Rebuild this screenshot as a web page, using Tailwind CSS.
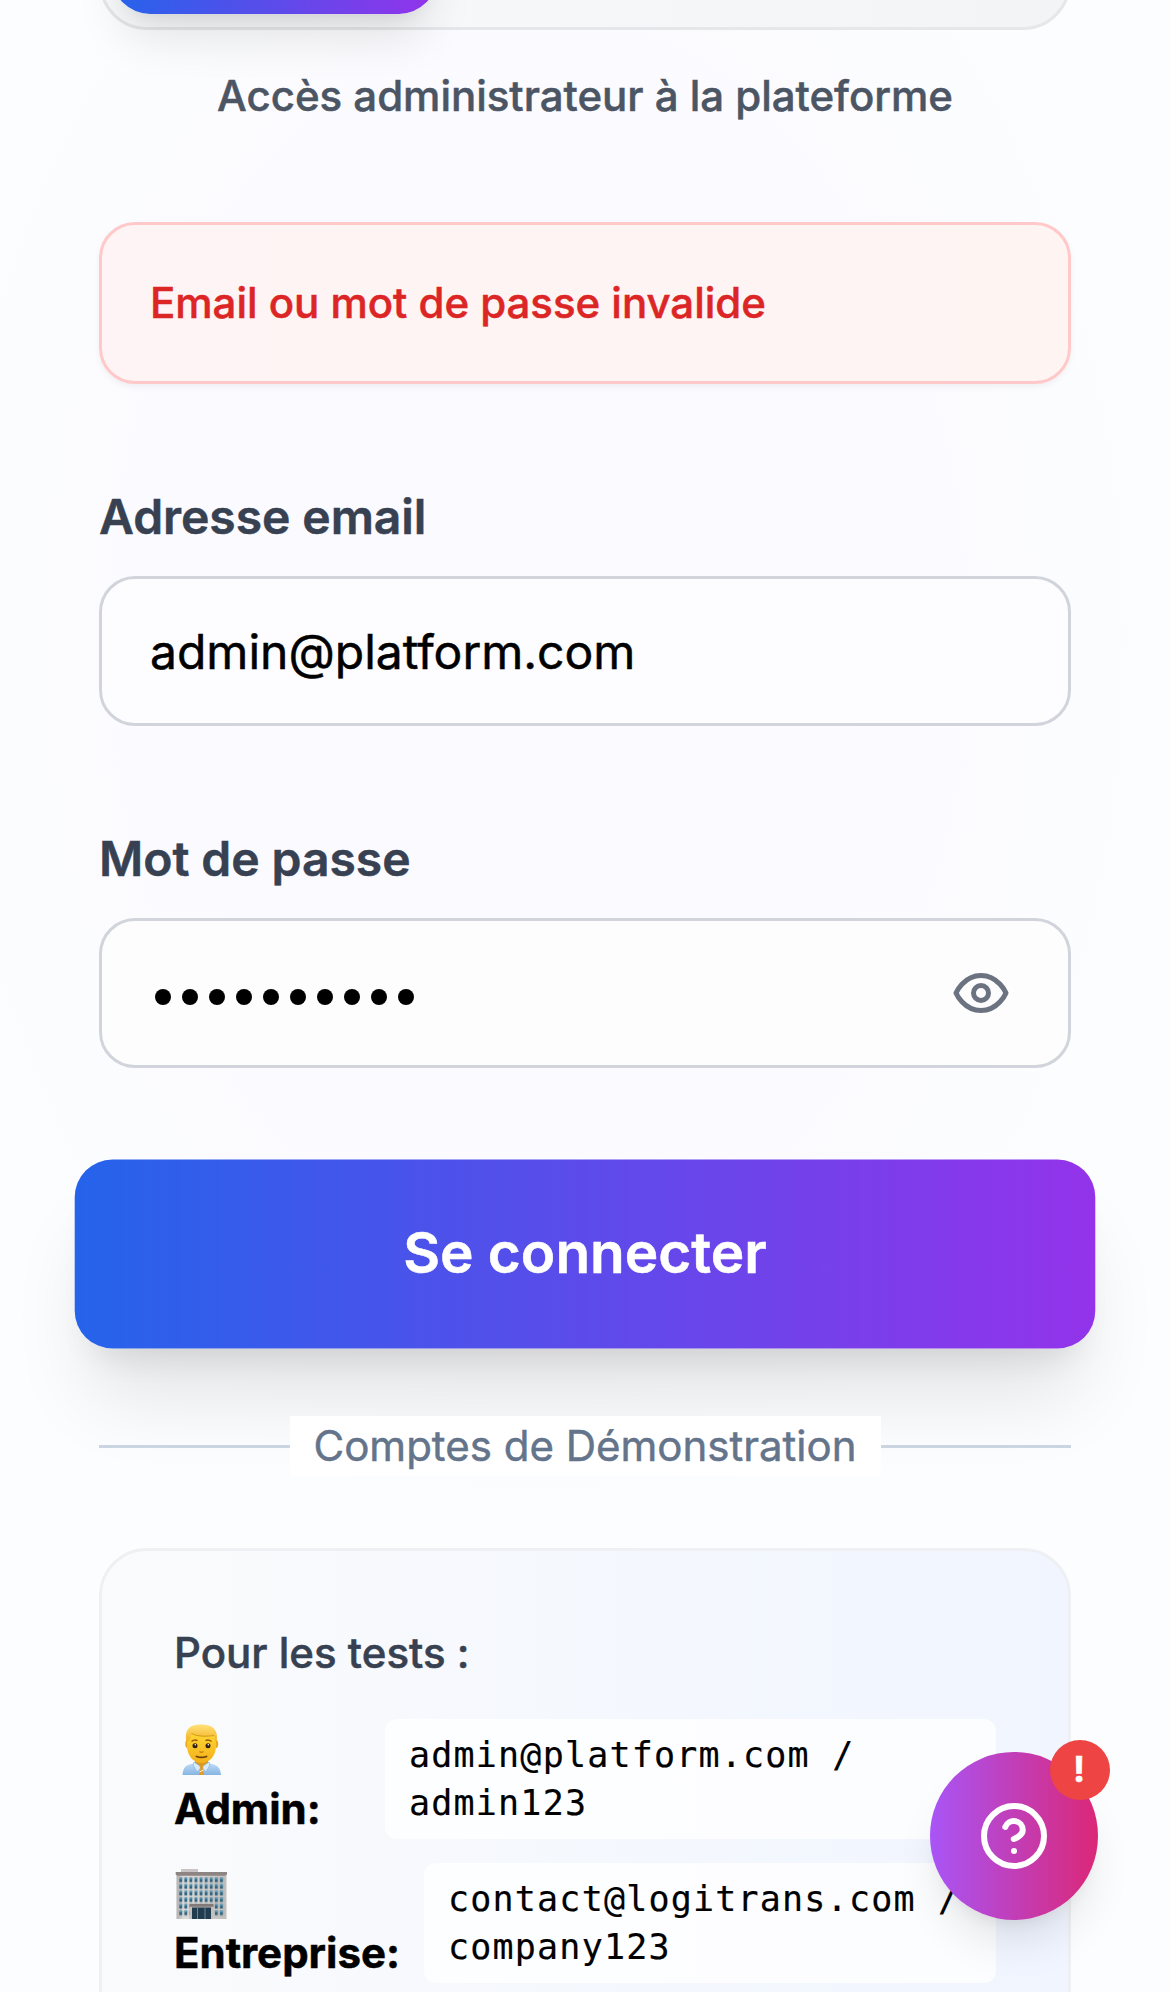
<!DOCTYPE html>
<html lang="fr">
<head>
<meta charset="utf-8">
<title>Connexion</title>
<script src="https://cdn.jsdelivr.net/npm/@tailwindcss/browser@4"></script>
</head>
<body class="bg-[#fdfdff]">
<main class="relative h-[1992px] w-[1170px] overflow-hidden bg-[radial-gradient(ellipse_620px_900px_at_540px_640px,#fbfaff_0%,#fbfaff_45%,#fcfdff_100%)] px-[99px] font-['Inter',sans-serif] text-[42px] leading-[60px] [-webkit-text-stroke:0.5px_currentColor]">

  <!-- Account type tabs -->
  <div class="-mt-[150px] flex h-[180px] items-end rounded-[48px] border-[3px] border-[#e5e7eb] bg-linear-to-r/srgb from-[#f9fafb] to-[#f3f4f6] pb-[13.500px] pl-[10px]">
    <div class="h-[126px] w-[325px] rounded-[38px] bg-linear-to-r/srgb from-[#2563eb] to-[#9333ea] shadow-[0_32px_47px_-9px_rgb(0_0_0/0.1),0_13px_19px_-13px_rgb(0_0_0/0.1)]"></div>
  </div>
  <p class="mt-9 text-center font-medium tracking-[-0.02px] text-[#4b5563]">Accès administrateur à la plateforme</p>

  <!-- Error -->
  <div class="mt-24 rounded-[36px] border-[3px] border-[#ffc9c9] bg-linear-to-r/srgb from-[#fef4f5] to-[#fef4f2] p-12 font-medium tracking-[-0.03px] text-[#dc2626] shadow-[0_3px_6px_rgb(0_0_0/0.05)]">Email ou mot de passe invalide</div>

  <!-- Form -->
  <label class="mt-[98px] block text-[48px] leading-[69px] font-semibold tracking-[-0.05px] text-[#374151]">Adresse email</label>
  <div class="mt-[25px] flex h-[150px] items-center rounded-[36px] border-[3px] border-[#d1d5db] bg-[#fdfdff] px-12 pt-px text-[48px] text-black">admin@platform.com</div>

  <label class="mt-[98px] block text-[48px] leading-[69px] font-semibold tracking-[-0.05px] text-[#374151]">Mot de passe</label>
  <div class="mt-[25px] flex h-[150px] items-center justify-between rounded-[36px] border-[3px] border-[#d1d5db] bg-[#fdfdfe] pr-[57px] pl-[53px]">
    <div class="mt-[7px] flex gap-[11px]">
      <span class="size-4 rounded-full bg-black"></span><span class="size-4 rounded-full bg-black"></span><span class="size-4 rounded-full bg-black"></span><span class="size-4 rounded-full bg-black"></span><span class="size-4 rounded-full bg-black"></span><span class="size-4 rounded-full bg-black"></span><span class="size-4 rounded-full bg-black"></span><span class="size-4 rounded-full bg-black"></span><span class="size-4 rounded-full bg-black"></span><span class="size-4 rounded-full bg-black"></span>
    </div>
    <svg class="size-[60px] text-[#6b7280]" viewBox="0 0 24 24" fill="none" stroke="currentColor" stroke-width="2" stroke-linecap="round" stroke-linejoin="round"><path d="M2 12s3-7 10-7 10 7 10 7-3 7-10 7-10-7-10-7Z"/><circle cx="12" cy="12" r="3"/></svg>
  </div>

  <button class="mt-24 flex h-[180px] w-full scale-105 items-center justify-center rounded-[36px] bg-linear-to-r/srgb from-[#2563eb] to-[#9333ea] pb-[3px] text-[54px] font-semibold text-white shadow-[0_60px_75px_-15px_rgb(0_0_0/0.1),0_24px_30px_-18px_rgb(0_0_0/0.1)]">Se connecter</button>

  <!-- Divider -->
  <div class="relative z-10 mt-[72px] flex items-center">
    <span class="h-[3px] flex-1 bg-[#cbd5e1]"></span>
    <span class="bg-white px-6 text-[#64748b]">Comptes de Démonstration</span>
    <span class="h-[3px] flex-1 bg-[#cbd5e1]"></span>
  </div>

  <!-- Demo accounts -->
  <section class="mt-[72px] h-[600px] rounded-[48px] border-[3px] border-[#eff0f3] bg-linear-to-r/srgb from-[#fafbfc] to-[#f0f5ff] p-[72px]">
    <h2 class="font-medium text-[#374151]">Pour les tests :</h2>
    <div class="mt-9 flex flex-col gap-6 text-black">
      <div class="flex h-[120px] items-center">
        <div class="w-[211px] font-bold">
          <svg class="block h-[60px] w-[54px]" viewBox="0 0 54 60">
            <defs>
              <linearGradient id="hair" x1="0" y1="0" x2="0" y2="1"><stop offset="0" stop-color="#ffe27a"/><stop offset="1" stop-color="#f3ae1c"/></linearGradient>
              <linearGradient id="skin" x1="0" y1="0" x2="0" y2="1"><stop offset="0" stop-color="#ffd935"/><stop offset="1" stop-color="#f3b01a"/></linearGradient>
              <linearGradient id="shirt" x1="0" y1="0" x2="0" y2="1"><stop offset="0" stop-color="#c4e0f8"/><stop offset="1" stop-color="#86b5e2"/></linearGradient>
            </defs>
            <path d="M8.500 56c.5-7 3-10 9-11l10-2 10 2c6 1 9 4 9.500 11Z" fill="url(#shirt)"/>
            <path d="M21 40h13v5l-6.500 5-6.500-5Z" fill="#dd9a18"/>
            <path d="m20 43 7.500 5-4.500 5-4-7Zm15 0-7.500 5 4.500 5 4-7Z" fill="#d6ebfb" stroke="#7aa9d6" stroke-width=".6"/>
            <path d="m25.500 47h4l-.8 3 1.600 6h-5.600l1.600-6Z" fill="#e39a2e"/><path d="m25.500 53 4-2" stroke="#fff2d0" stroke-width="1"/>
            <ellipse cx="13.500" cy="25" rx="2.200" ry="4" fill="#eea916"/><ellipse cx="42" cy="25" rx="2.200" ry="4" fill="#eea916"/>
            <path d="M13 18c0-8 29-8 29 0v9c0 9-6 17-14.500 17S13 36 13 27Z" fill="url(#skin)"/>
            <path d="M12.500 23C10 11 15 5.500 27 5.500S45 11 42.500 23c-1.500-1-2-4-2.500-6.500-7 1-17 1.500-22-2-1.500 3-2 7.500-5.500 8.500Z" fill="url(#hair)"/>
            <path d="M17.500 14.500c7 3.500 16 3 22.500 2" stroke="#c98a14" stroke-width=".8" fill="none"/>
            <path d="M17.500 22.500q3-2.500 6-.8m8-0q3-1.700 6 .8" stroke="#9a5a0c" stroke-width="1.400" fill="none"/>
            <circle cx="21" cy="26.700" r="2.500" fill="#32200b"/><circle cx="34" cy="26.700" r="2.500" fill="#32200b"/><circle cx="21.300" cy="25.700" r=".8" fill="#fff"/><circle cx="34.300" cy="25.700" r=".8" fill="#fff"/>
            <path d="M25.500 32.500q2 1.600 4 0" stroke="#cc7d10" stroke-width="1.400" fill="none"/><path d="M22.500 37.500q5 1.800 10 0" stroke="#6b3d08" stroke-width="1.800" fill="none" stroke-linecap="round"/>
          </svg>
          Admin:
        </div>
        <code class="h-[120px] flex-1 rounded-xl bg-white/80 px-6 py-3 font-['DejaVu_Sans_Mono',monospace] text-[35px] leading-[48px] tracking-[1.2px] [-webkit-text-stroke:0.2px_currentColor]">admin@platform.com /<br>admin123</code>
      </div>
      <div class="flex h-[120px] items-center">
        <div class="w-[250px] font-bold">
          <svg class="block h-[60px] w-[54px]" viewBox="0 0 54 60">
            <defs>
              <linearGradient id="wall"><stop offset="0" stop-color="#b4b0af"/><stop offset=".15" stop-color="#dedbd9"/><stop offset="1" stop-color="#c2bebc"/></linearGradient>
              <pattern id="win" x="4.500" y="14" width="5.100" height="6.600" patternUnits="userSpaceOnUse"><rect x=".7" y=".6" width="2.900" height="4.600" fill="#32647f"/><rect x=".7" y=".6" width="2.900" height="1.600" fill="#5b9cba"/></pattern>
            </defs>
            <path d="M7 6h17v4H7Z" fill="#c9c5c4"/>
            <path d="M2.500 10h50v46h-50Z" fill="url(#wall)"/>
            <path d="M1.700 9h51.300v2.500l-2 1.200H3.500l-1.800-1.200Z" fill="#8c8583"/>
            <path d="M4.500 14h45.900v39.600H4.500Z" fill="url(#win)"/>
            <path d="M15.500 40.500h24V56h-24Z" fill="#c4c0be"/>
            <path d="M15.500 41h24v2.800h-24Z" fill="#827a78"/>
            <path d="M18 44.500h19V56H18Z" fill="#203c4e"/>
            <path d="M23.500 45v11m7.500-11v11" stroke="#6f8591" stroke-width="1"/>
          </svg>
          Entreprise:
        </div>
        <code class="h-[120px] flex-1 rounded-xl bg-white/80 px-6 py-3 font-['DejaVu_Sans_Mono',monospace] text-[35px] leading-[48px] tracking-[1.2px] [-webkit-text-stroke:0.2px_currentColor]">contact@logitrans.com /<br>company123</code>
      </div>
    </div>
  </section>

  <!-- Floating help button -->
  <button class="absolute right-[72px] bottom-[72px] z-20 flex size-[168px] items-center justify-center rounded-full bg-linear-to-r/srgb from-[#a855f7] to-[#db2777] text-white shadow-[0_30px_45px_-9px_rgb(0_0_0/0.1),0_12px_18px_-12px_rgb(0_0_0/0.1)]">
    <svg class="size-[72px]" viewBox="0 0 24 24" fill="none" stroke="currentColor" stroke-width="2" stroke-linecap="round" stroke-linejoin="round"><circle cx="12" cy="12" r="10"/><path d="M9.090 9a3 3 0 0 1 5.830 1c0 2-3 3-3 3"/><path d="M12 17h.01"/></svg>
    <span class="absolute -top-3 -right-3 flex size-[60px] items-center justify-center rounded-full bg-[#ef4444] pr-0.5 pb-0.5 text-[36px] leading-[48px] font-bold">!</span>
  </button>
</main>
</body>
</html>
